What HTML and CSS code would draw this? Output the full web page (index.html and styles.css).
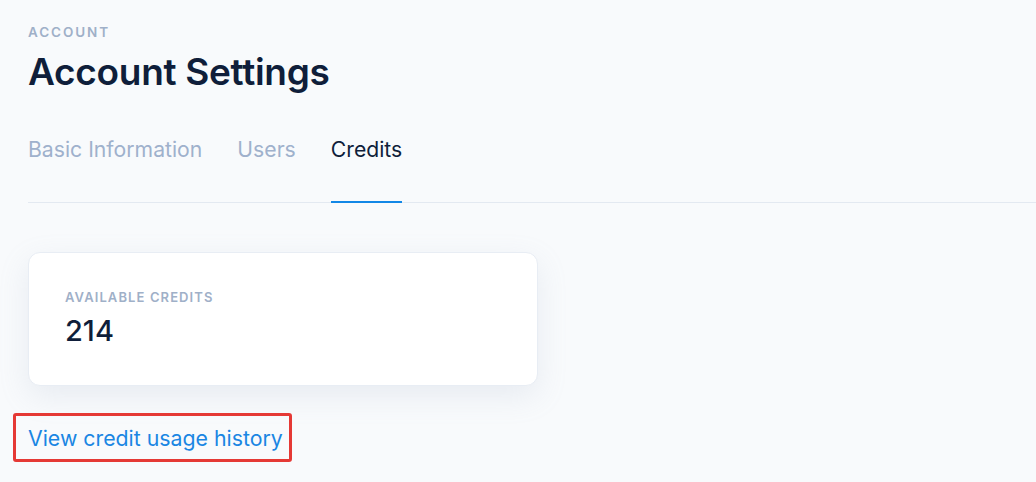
FILE: index.html
```html
<!DOCTYPE html>
<html lang="en">
<head>
<meta charset="utf-8">
<title>Account Settings</title>
<link rel="stylesheet" href="styles.css">
</head>
<body>
<main class="page">
  <header class="page-header">
    <div class="eyebrow">ACCOUNT</div>
    <h1 class="title">Account Settings</h1>
  </header>
  <nav class="tabs">
    <a class="tab">Basic Information</a>
    <a class="tab">Users</a>
    <a class="tab tab-active">Credits</a>
  </nav>
  <section class="content">
    <div class="card">
      <div class="card-label">AVAILABLE CREDITS</div>
      <div class="card-value">214</div>
    </div>
    <div class="link-wrap">
      <a class="history-link" href="#">View credit usage history</a>
    </div>
  </section>
</main>
</body>
</html>
```
FILE: styles.css
```css
html, body {
  margin: 0;
  padding: 0;
}
body {
  background: #f8fafc;
  font-family: "Inter", "Lato", "Liberation Sans", sans-serif;
  color: #0f1e3a;
  width: 1036px;
  height: 482px;
  overflow: hidden;
}
.page {
  padding: 24px 0 0 28px;
}
.eyebrow {
  font-size: 13.5px;
  font-weight: 600;
  letter-spacing: 1.9px;
  color: #9fb0c8;
  line-height: 16px;
}
.title {
  margin: 10px 0 0;
  font-size: 37px;
  font-weight: 600;
  line-height: 44px;
  letter-spacing: -0.3px;
  color: #0f1e3a;
}
.tabs {
  display: flex;
  gap: 35px;
  margin-top: 33px;
  border-bottom: 1px solid #e3e9f1;
}
.tab {
  font-size: 21.2px;
  line-height: 28px;
  color: #9fb1cc;
  padding: 8px 0 38px;
  border-bottom: 2px solid transparent;
  margin-bottom: -1px;
  cursor: pointer;
}
.tab-active {
  color: #0f1e3a;
  border-bottom-color: #1287e6;
}
.content {
  padding-top: 49px;
}
.card {
  width: 510px;
  height: 134px;
  box-sizing: border-box;
  background: #ffffff;
  border: 1px solid #e8edf4;
  border-radius: 12px;
  box-shadow: 0 10px 30px rgba(148, 163, 184, 0.16);
  padding: 36px 36px 0;
}
.card-label {
  font-size: 13px;
  font-weight: 600;
  letter-spacing: 1.1px;
  color: #9fb0c8;
  line-height: 16px;
}
.card-value {
  margin-top: 9px;
  font-size: 29px;
  font-weight: 500;
  line-height: 34px;
  color: #0f1e3a;
}
.link-wrap {
  margin: 27px 0 0 -15px;
  display: inline-block;
  border: 3px solid #e53935;
  border-radius: 3px;
  padding: 9px 6px 8px 12px;
}
.history-link {
  font-size: 21.3px;
  line-height: 26px;
  color: #1a86e3;
  text-decoration: none;
}
```
